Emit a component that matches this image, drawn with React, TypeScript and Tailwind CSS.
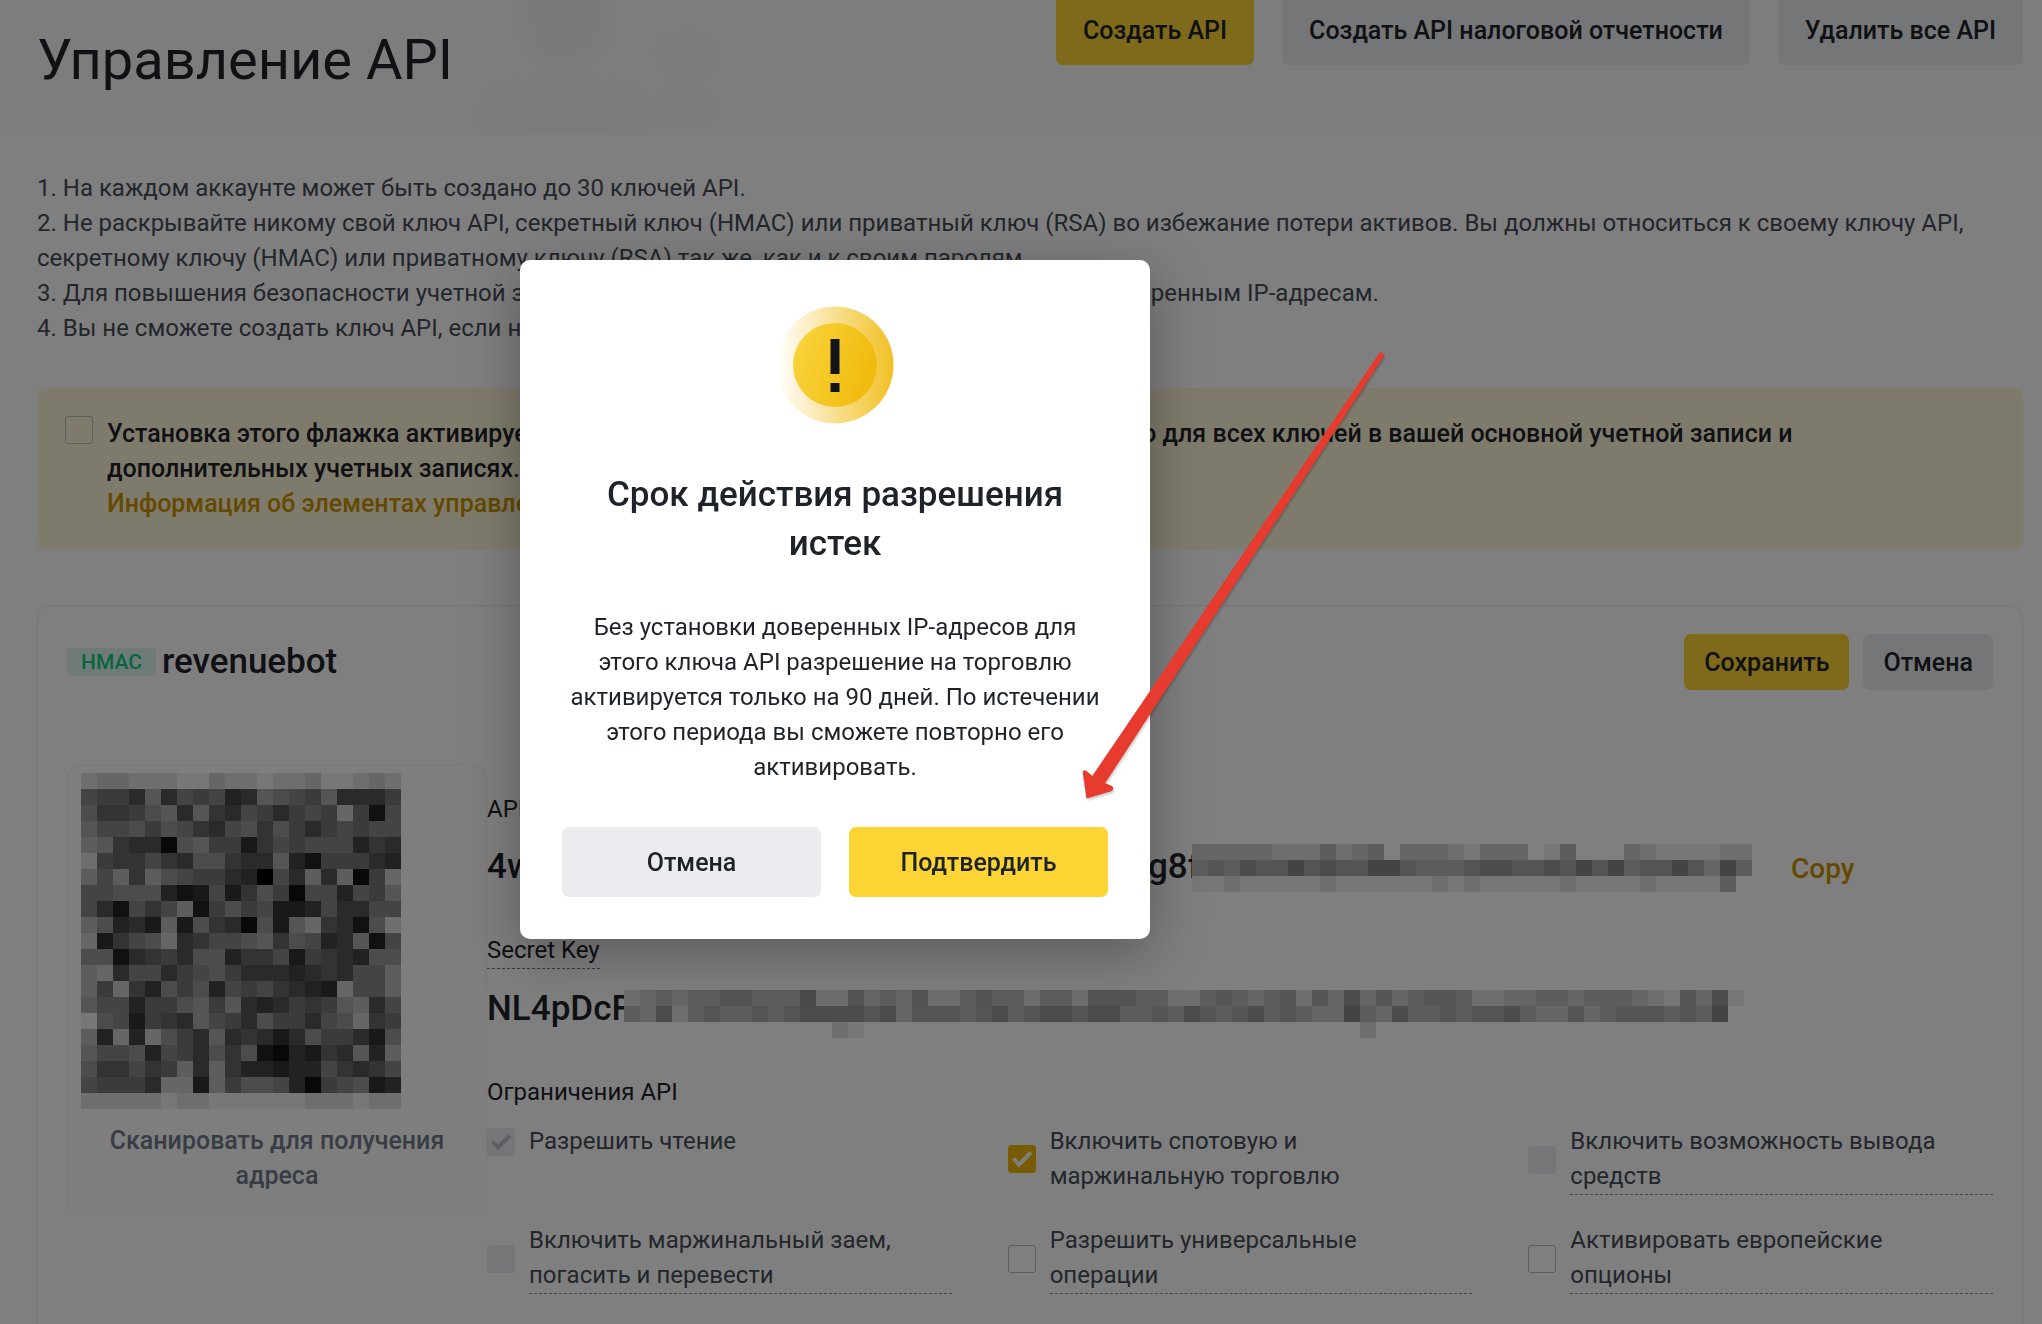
import { useState } from "react";
import type { ReactNode } from "react";

// One hex digit per cell, 0 is black and f is white; a dot leaves the cell empty.
const QR_CELLS = [
    "dccdddeecddeddceedcd",
    "8775a587845a987a5557",
    "96679a5a65875787c728",
    "a8897986589697578788",
    "ba65519a773687888465",
    "d76686599655a4277754",
    "b8b6b987754085b5b17c",
    "8899942383697188487a",
    "852868b2797833485588",
    "b9453b3965193ac6529d",
    "c3689c56889a69845a28",
    "99256759946683765499",
    "bc58857897555456588b",
    "b7c6497948786543c88b",
    "a884779a7a545767ab58",
    "e983765a875977589c67",
    "b4c4c975a56535977539",
    "a8894875969214365a4b",
    "966867b5b64434486568",
    "87775cc3b79984178934",
    "dddddeddeeeeeedddedd",
];

const API_KEY_CELLS = [
    "cccccdddbdcbfcccdecccfebfffcdeeeedd",
    "bab9aa8a9aa88abbba99aa9a8a8baa8ac8b",
    "eedeeeeedeeeeeededeeeeedeeeedeeeebf",
];

const SECRET_KEY_CELLS = [
    "dcbcbbaabbb9ddacbcaddbabbdbbdaaabbddbabcbadac9cacbaabddccbbcbbbcdeac9e",
    "bc9dbabbaba9999a9caaaba9ba99a99bbab9aba9babcc8bc9bbabaa9bccacbaaabab8f",
    ".............de...............................d.......................",
];

function Mosaic({ rows, className }: { rows: string[]; className: string }) {
    return (
        <svg
            className={className}
            viewBox={`0 0 ${rows[0].length} ${rows.length}`}
            preserveAspectRatio="none"
            shapeRendering="crispEdges"
            aria-hidden="true"
        >
            {rows.map((row, y) =>
                row.split("").map((cell, x) =>
                    cell === "." ? null : (
                        <rect key={`${x}-${y}`} x={x} y={y} width="1" height="1" fill={`#${cell.repeat(3)}`} />
                    )
                )
            )}
        </svg>
    );
}

type CheckboxProps = {
    label: ReactNode;
    checked?: boolean;
    disabled?: boolean;
    underlined?: boolean;
};

function Checkbox({ label, checked = false, disabled = false, underlined = false }: CheckboxProps) {
    const [on, setOn] = useState(checked);

    return (
        <label className="flex items-center gap-3.5 text-[#474d57]">
            <span className="grid shrink-0">
                <input
                    type="checkbox"
                    checked={on}
                    disabled={disabled}
                    onChange={() => setOn(!on)}
                    className="col-start-1 row-start-1 size-7 appearance-none rounded-[3px] border border-[#b7bdc6] checked:border-[#f0b90b] checked:bg-[#f0b90b] disabled:border-[#eaecef] disabled:bg-[#eaecef]"
                />
                {on && (
                    <svg
                        viewBox="0 0 28 28"
                        className={
                            disabled
                                ? "col-start-1 row-start-1 size-7 pointer-events-none text-[#b7bdc6]"
                                : "col-start-1 row-start-1 size-7 pointer-events-none text-white"
                        }
                        fill="none"
                        stroke="currentColor"
                        strokeWidth="4"
                    >
                        <path d="M5.5 13.5 11 19.5 23 7.5" />
                    </svg>
                )}
            </span>
            <span className={underlined ? "flex-1 border-b border-dashed border-[#848e9c]" : "flex-1"}>{label}</span>
        </label>
    );
}

function WarningIcon() {
    return (
        <svg viewBox="0 0 126 126" className="size-[126px]" aria-hidden="true">
            <defs>
                <linearGradient id="halo" x1="0" y1="0" x2="1" y2="0">
                    <stop offset="0" stopColor="#f0b90b" stopOpacity="0" />
                    <stop offset="1" stopColor="#f0b90b" stopOpacity="0.9" />
                </linearGradient>
                <linearGradient id="coin" x1="0" y1="0.35" x2="1" y2="0.65">
                    <stop offset="0" stopColor="#f8d33a" />
                    <stop offset="1" stopColor="#f0b90b" />
                </linearGradient>
            </defs>
            <circle cx="63" cy="63" r="58.5" fill="url(#halo)" />
            <circle cx="63" cy="63" r="42" fill="url(#coin)" />
            <path d="M58.5 37h9v35h-9zM58.5 81h9v9h-9z" fill="#14151a" />
        </svg>
    );
}

export default function App() {
    return (
        <div className="relative flex h-screen flex-col overflow-hidden bg-white font-['Roboto','Noto_Sans',sans-serif] text-[24px] leading-[35px] text-[#1e2329]">
            <header className="relative flex h-[135px] shrink-0 items-start justify-between overflow-hidden bg-[#fafafa] pr-[19px] pl-[37px]">
                <div className="absolute -top-12 left-[527px] h-28 w-[76px] rounded-full bg-[#f4f4f5] blur-sm" />
                <div className="absolute top-[88px] left-[485px] h-16 w-[160px] rounded-full bg-[#f7f7f8] blur-sm" />
                <div className="absolute top-10 left-[664px] h-7 w-11 rounded-full bg-[#f5f5f6] blur-sm" />
                <div className="absolute top-[92px] left-[664px] h-7 w-11 rounded-full bg-[#f7f7f8] blur-sm" />
                <h1 className="relative pt-[25px] text-[56px] leading-[70px]">Управление API</h1>
                <div className="flex gap-7 text-[25px] font-medium">
                    <button className="h-[65px] rounded-b-[7px] bg-[#fcd535] px-[27px] pb-1">Создать API</button>
                    <button className="h-[65px] rounded-b-[7px] bg-[#eaecef] px-[27px] pb-1">
                        Создать API налоговой отчетности
                    </button>
                    <button className="h-[65px] rounded-b-[7px] bg-[#eaecef] px-[27px] pb-1">Удалить все API</button>
                </div>
            </header>

            <main className="flex grow flex-col pt-9 pr-[19px] pl-[37px]">
                <div className="text-[#474d57]">
                    <p>1. На каждом аккаунте может быть создано до 30 ключей API.</p>
                    <p>
                        2. Не раскрывайте никому свой ключ API, секретный ключ (HMAC) или приватный ключ (RSA) во
                        избежание потери активов. Вы должны относиться к своему ключу API, секретному ключу (HMAC) или
                        приватному ключу (RSA) так же, как и к своим паролям.
                    </p>
                    <p>
                        3. Для повышения безопасности учетной записи рекомендуется ограничить доступ только к
                        доверенным IP-адресам.
                    </p>
                    <p>4. Вы не сможете создать ключ API, если не прошли верификацию личности.</p>
                </div>

                <section className="mt-[42px] flex gap-3.5 rounded-[7px] bg-[#fef6d8] p-7 text-[25px] font-medium">
                    <input
                        id="default-controls"
                        type="checkbox"
                        className="size-7 shrink-0 appearance-none rounded-[3px] border border-[#b7bdc6]"
                    />
                    <div>
                        <label htmlFor="default-controls">
                            Установка этого флажка активирует элементы управления безопасности по умолчанию для всех
                            ключей в вашей основной учетной записи и
                            <br />
                            дополнительных учетных записях.
                        </label>
                        <br />
                        <a href="#controls" className="text-[#c99400]">
                            Информация об элементах управления
                        </a>
                    </div>
                </section>

                <section className="mt-14 grow rounded-t-[14px] border border-b-0 border-[#eaecef] px-[29px] pt-7">
                    <div className="flex items-center justify-between">
                        <div className="flex items-center gap-1.5">
                            <span className="rounded-[4px] bg-[#dff6ef] px-3.5 text-[21px] leading-7 font-medium text-[#0ecb81]">
                                HMAC
                            </span>
                            <h2 className="text-[35px] leading-[42px] font-medium">revenuebot</h2>
                        </div>
                        <div className="flex gap-3.5 text-[25px] font-medium">
                            <button className="h-14 rounded-[7px] bg-[#fcd535] px-5">Сохранить</button>
                            <button className="h-14 rounded-[7px] bg-[#eaecef] px-5">Отмена</button>
                        </div>
                    </div>

                    <div className="mt-[74px] flex items-start">
                        <div className="w-[420px] shrink-0 rounded-[14px] border border-[#eff0f2] bg-[#fcfcfc] px-[13px] pt-2 pb-[21px]">
                            <Mosaic rows={QR_CELLS} className="h-[336px] w-[320px]" />
                            <p className="mt-3.5 text-center text-[25px] font-medium text-[#707a8a]">
                                Сканировать для получения
                                <br />
                                адреса
                            </p>
                        </div>

                        <div className="min-w-0 flex-1 pt-7">
                            <p>API Key</p>
                            <div className="mt-[17px] flex items-start">
                                <div className="flex w-[705px] justify-between text-[35px] leading-[46px] font-medium">
                                    <span>4w</span>
                                    <span className="w-11">g8f</span>
                                </div>
                                <Mosaic rows={API_KEY_CELLS} className="h-12 w-[560px]" />
                                <button className="ml-[39px] self-center text-[28px] font-medium text-[#c99400]">
                                    Copy
                                </button>
                            </div>
                            <p className="mt-[41px] w-fit border-b border-dashed border-[#707a8a]">Secret Key</p>
                            <div className="mt-[17px] flex items-start">
                                <span className="w-[137px] text-[35px] leading-[46px] font-medium">NL4pDcF</span>
                                <Mosaic rows={SECRET_KEY_CELLS} className="mt-1 h-12 w-[1120px]" />
                            </div>
                            <p className="mt-[37px]">Ограничения API</p>
                            <div className="mt-3.5 grid grid-cols-3 items-start gap-x-14 gap-y-7">
                                <Checkbox label="Разрешить чтение" checked disabled />
                                <Checkbox label={<>Включить спотовую и<br />маржинальную торговлю</>} checked />
                                <Checkbox label={<>Включить возможность вывода<br />средств</>} disabled underlined />
                                <Checkbox label={<>Включить маржинальный заем,<br />погасить и перевести</>} disabled underlined />
                                <Checkbox label={<>Разрешить универсальные<br />операции</>} underlined />
                                <Checkbox label={<>Активировать европейские<br />опционы</>} underlined />
                            </div>
                        </div>
                    </div>
                </section>
            </main>

            <div className="fixed inset-0 bg-black/50" />

            <div
                role="dialog"
                aria-modal="true"
                aria-labelledby="dialog-title"
                className="absolute top-[260px] left-[520px] flex w-[630px] flex-col items-center gap-[42px] rounded-[10px] bg-white p-[42px] text-center shadow-[0_14px_56px_rgba(0,0,0,0.3)]"
            >
                <WarningIcon />
                <h2 id="dialog-title" className="text-[35px] leading-[49px] font-medium">
                    Срок действия разрешения
                    <br />
                    истек
                </h2>
                <p>
                    Без установки доверенных IP-адресов для этого ключа API разрешение на торговлю активируется только
                    на 90 дней. По истечении этого периода вы сможете повторно его активировать.
                </p>
                <div className="flex gap-7 self-stretch text-[25px] font-medium">
                    <button className="h-[70px] flex-1 rounded-[7px] bg-[#eaecef]">Отмена</button>
                    <button className="h-[70px] flex-1 rounded-[7px] bg-[#fcd535]">Подтвердить</button>
                </div>
            </div>

            <svg
                viewBox="0 0 310 455"
                className="pointer-events-none absolute top-[350px] left-[1080px] h-[455px] w-[310px] drop-shadow-[1px_2px_1px_rgba(0,0,0,0.2)]"
                aria-hidden="true"
            >
                <path
                    d="M300 3.5 12.5 427 6 421.5Q3.5 420 3.5 423L7 447.5 31 440.5Q34 438 31 436.5L24 433.5 303 6Q303.5 2 300 3.5Z"
                    fill="#e63b2e"
                    stroke="#e63b2e"
                    strokeWidth="1.5"
                    strokeLinejoin="round"
                />
            </svg>
        </div>
    );
}
